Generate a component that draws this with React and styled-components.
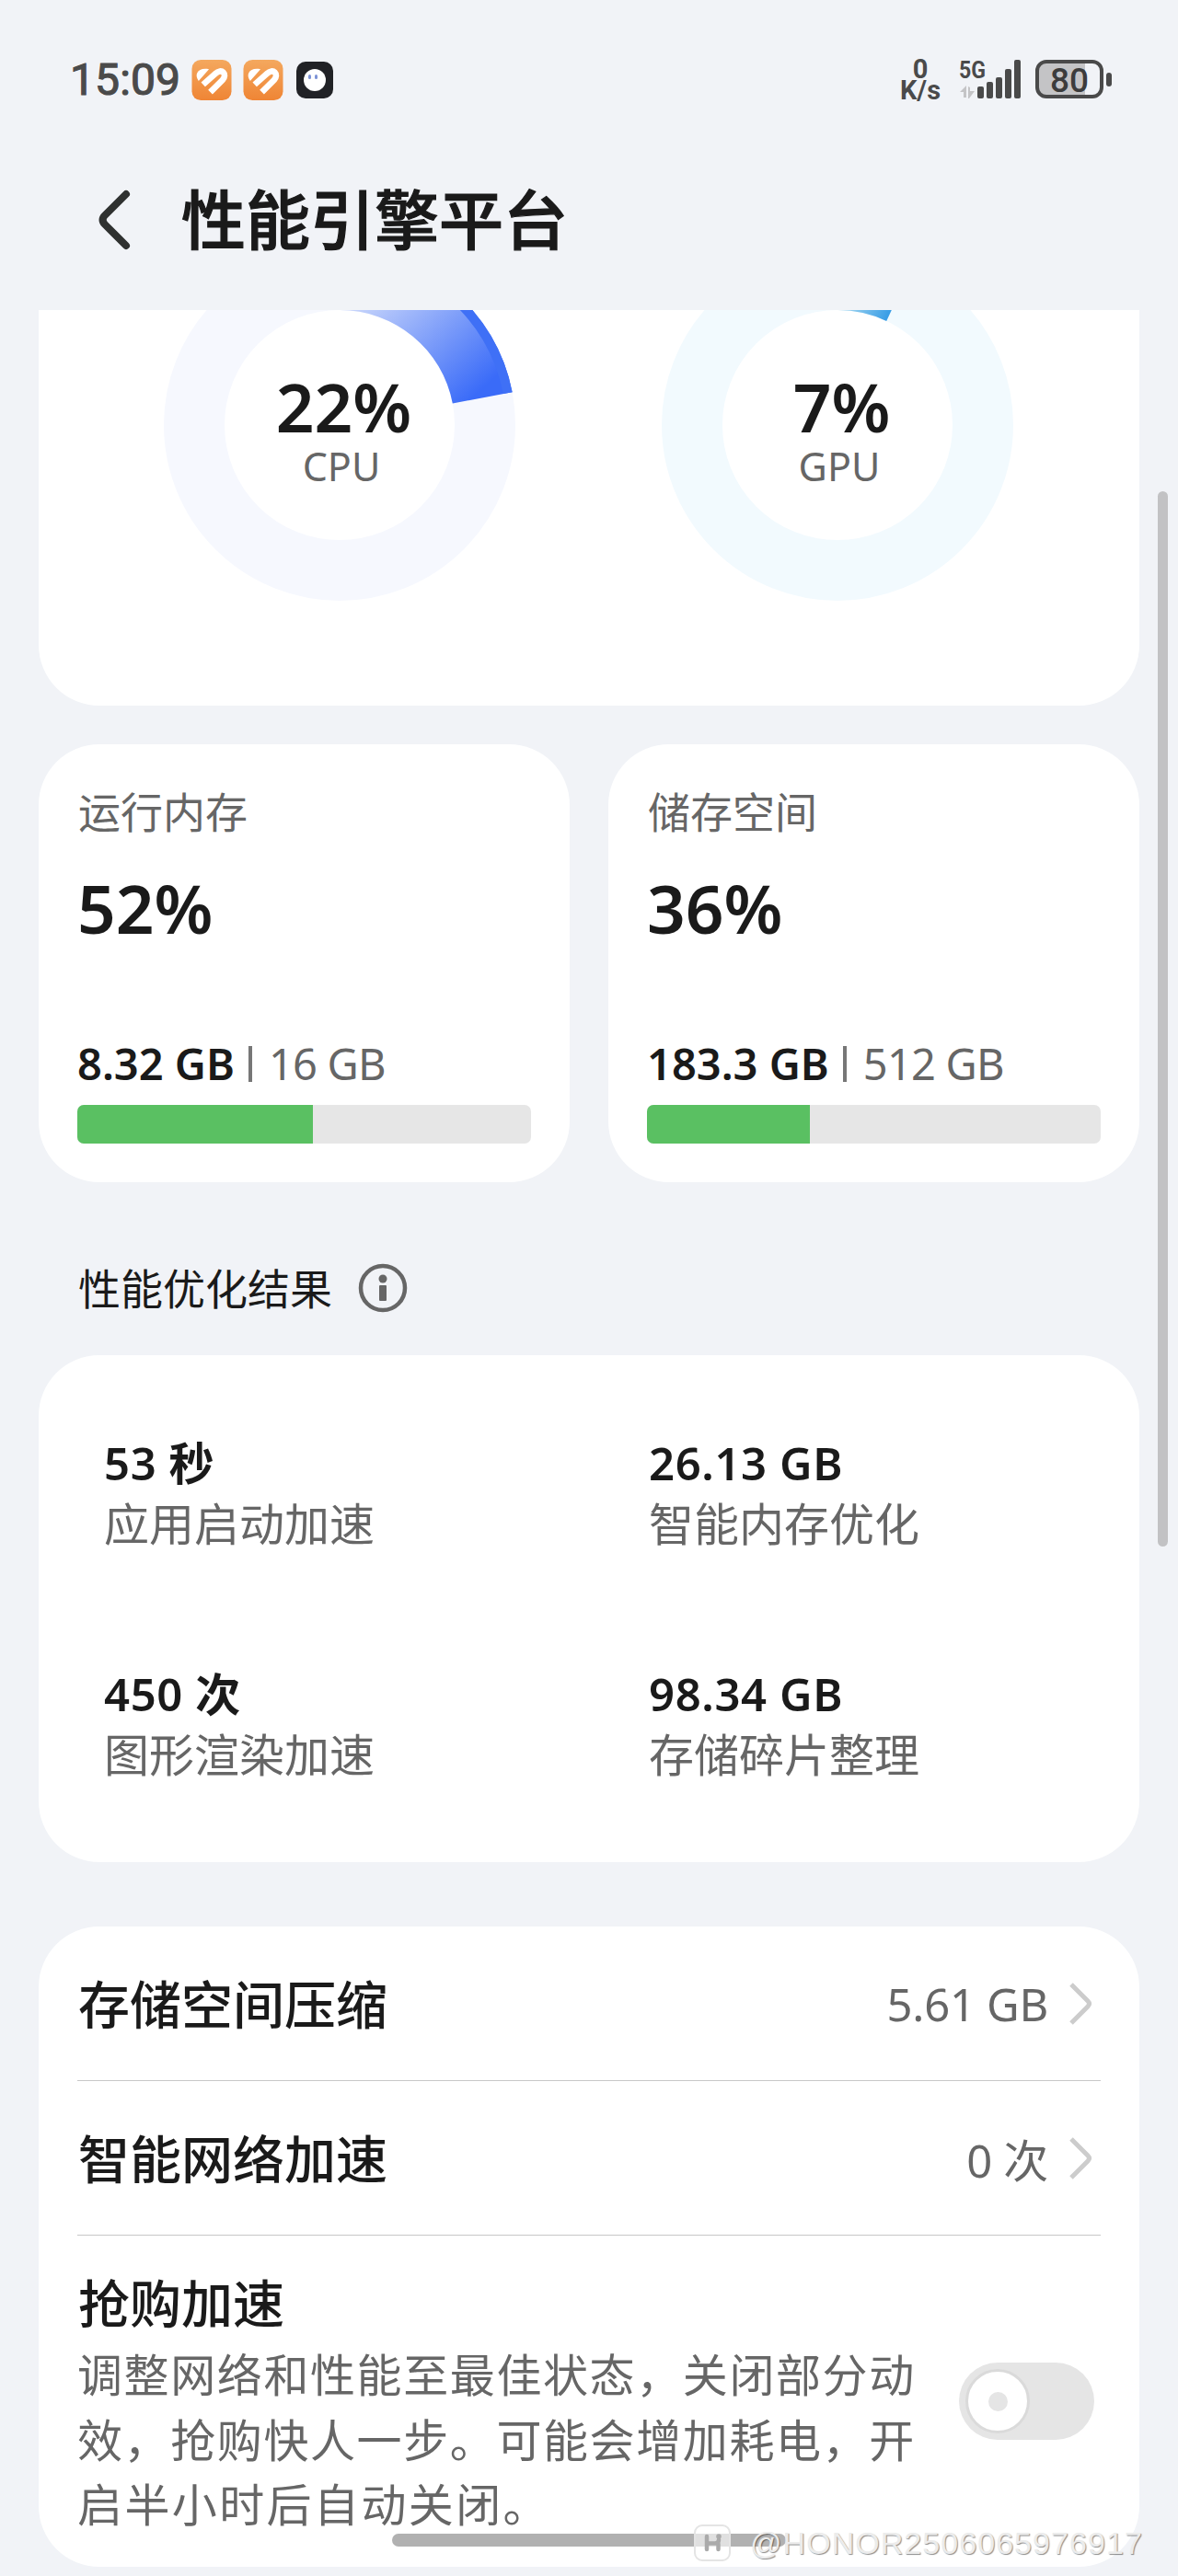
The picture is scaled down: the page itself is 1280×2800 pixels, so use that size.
import React from 'react';
import styled, { createGlobalStyle } from 'styled-components';

const GlobalStyle = createGlobalStyle`
  * {
    box-sizing: border-box;
  }

  body {
    margin: 0;
    background: #f1f3f7;
    font-family: 'Noto Sans', 'Noto Sans CJK SC', sans-serif;
    color: #1a1a1a;
  }
`;

const Screen = styled.div`
  position: relative;
  width: 1280px;
  height: 2800px;
  overflow: hidden;
  background: #f1f3f7;
`;

const StatusBar = styled.div`
  display: flex;
  justify-content: space-between;
  height: 173px;
  padding: 64px 71px 0 76px;
  color: #4a4a4a;
`;

const StatusGroup = styled.div`
  display: flex;
  height: 45px;
  align-items: center;
`;

const Clock = styled.span`
  width: 132px;
  font-family: Roboto, sans-serif;
  font-size: 48px;
  line-height: 45px;
  letter-spacing: 0.1px;
  -webkit-text-stroke: 1.2px #4a4a4a;
`;

const AppIcon = styled.svg`
  width: ${props => props.$size}px;
  height: ${props => props.$size}px;
  margin-left: ${props => props.$gap}px;
`;

const NetSpeed = styled.div`
  width: 46px;
  margin-right: 19px;
  font-family: Roboto, sans-serif;
  font-size: 29px;
  font-weight: 700;
  line-height: 23px;
  text-align: center;
`;

const Signal = styled.svg`
  width: 68px;
  height: 45px;
  margin-right: 15px;
  overflow: visible;
`;

const Battery = styled.svg`
  width: 84px;
  height: 45px;
`;

const Header = styled.header`
  display: flex;
  align-items: center;
  height: 132px;
  padding-left: 106px;
  margin-bottom: 32px;
`;

const BackIcon = styled.svg`
  width: 38px;
  height: 68px;
  margin-right: 53px;
`;

const Title = styled.h1`
  margin: 0;
  font-size: 70px;
  font-weight: 500;
  line-height: 100px;
  -webkit-text-stroke: 1.2px #1a1a1a;
`;

const Content = styled.main`
  display: flex;
  flex-direction: column;
  padding: 0 42px;
`;

const Card = styled.section`
  background: #fff;
  border-radius: 66px;
`;

const DialCard = styled(Card)`
  display: flex;
  justify-content: space-between;
  height: 430px;
  padding: 0 137px 0 136px;
  border-radius: 0 0 66px 66px;
`;

const Dial = styled.div`
  display: grid;
  width: 382px;
  height: 316px;

  > * {
    grid-area: 1 / 1;
  }
`;

const DialLabel = styled.div`
  padding: 63px 0 0 4px;
  text-align: center;
`;

const Percent = styled.div`
  font-size: 73px;
  font-weight: 600;
  line-height: 84px;
`;

const DialPercent = styled(Percent)`
  padding-left: 5px;
`;

const DialName = styled.div`
  font-size: 43px;
  line-height: 46px;
  color: #666;
`;

const UsageRow = styled.div`
  display: flex;
  gap: 42px;
  margin-top: 42px;
`;

const UsageCard = styled(Card)`
  flex: 1;
  height: 476px;
  padding: 40px 42px 0;
`;

const UsageName = styled.div`
  height: 96px;
  padding-left: 1px;
  font-size: 46px;
  line-height: 66px;
  color: #666;
`;

const UsageAmount = styled.div`
  display: flex;
  align-items: center;
  height: 56px;
  margin: 99px 0 17px;
  font-size: 47px;
  white-space: pre;
`;

const Used = styled.span`
  font-weight: 600;
`;

const Divider = styled.span`
  width: 4px;
  height: 39px;
  margin: 0 18px 0 15px;
  background: #777;
`;

const Total = styled.span`
  letter-spacing: -0.8px;
  color: #666;
`;

const Track = styled.div`
  height: 42px;
  overflow: hidden;
  border-radius: 7px;
  background: #e6e6e6;
`;

const Fill = styled.div`
  height: 100%;
  background: #5ac062;
`;

const SectionHead = styled.div`
  display: flex;
  align-items: center;
  gap: 28px;
  height: 188px;
  padding: 42px 42px 0;
`;

const SectionTitle = styled.h2`
  margin: 0;
  padding: 0 0 4px 1px;
  font-size: 46px;
  font-weight: 400;
`;

const InfoIcon = styled.svg`
  width: 54px;
  height: 54px;
`;

const ResultCard = styled(Card)`
  display: grid;
  grid-template-columns: 592px 1fr;
  grid-auto-rows: 251px;
  height: 551px;
  padding: 83px 0 0 71px;
`;

const ResultValue = styled.div`
  font-size: 49px;
  font-weight: 600;
  line-height: 68px;
  letter-spacing: 0.6px;
`;

const ResultName = styled.div`
  font-size: 49px;
  line-height: 64px;
  color: #666;
`;

const ListCard = styled(Card)`
  height: 696px;
  margin-top: 70px;
  padding: 0 42px;
`;

const ListRow = styled.div`
  display: flex;
  align-items: center;
  height: 168px;
  padding-right: 9px;
  border-bottom: 1px solid #c8c8c8;
`;

const ItemTitle = styled.div`
  flex: 1;
  padding-left: 1px;
  font-size: 56px;
  font-weight: 500;
  line-height: 80px;
`;

const ItemValue = styled.div`
  font-size: 49px;
  letter-spacing: -0.3px;
  color: #666;
`;

const ArrowIcon = styled.svg`
  width: 26px;
  height: 48px;
  margin-left: 22px;
`;

const SwitchRow = styled.div`
  display: flex;
  align-items: flex-start;
  justify-content: space-between;
  padding: 33px 7px 0 0;
`;

const Description = styled.div`
  width: 910px;
  margin-top: 3px;
  font-size: 49px;
  line-height: 70.5px;
  color: #666;
`;

const Line = styled.div`
  white-space: nowrap;
  letter-spacing: ${props => props.$spacing}px;
`;

const Toggle = styled.div`
  display: flex;
  align-items: center;
  width: 147px;
  height: 84px;
  margin-top: 105px;
  padding-left: 7px;
  border-radius: 42px;
  background: #e5e5e5;
`;

const Knob = styled.div`
  display: flex;
  align-items: center;
  justify-content: center;
  width: 70px;
  height: 70px;
  border: 3px solid #dadada;
  border-radius: 50%;
  background: #fff;

  &::after {
    content: '';
    width: 21px;
    height: 21px;
    border-radius: 50%;
    background: #e5e5e5;
  }
`;

const ScrollThumb = styled.div`
  position: absolute;
  top: 534px;
  right: 11px;
  width: 11px;
  height: 1147px;
  border-radius: 6px;
  background: #c2c2c4;
`;

const HomeBar = styled.div`
  position: absolute;
  bottom: 32px;
  left: 426px;
  width: 428px;
  height: 14px;
  border-radius: 7px;
  background: #b1b1b1;
`;

const Watermark = styled.div`
  position: absolute;
  bottom: 14px;
  left: 753px;
  display: flex;
  align-items: center;
  height: 44px;
  font-family: 'Liberation Sans', Arial, sans-serif;
  font-size: 34px;
  letter-spacing: 1.05px;
  color: #ececec;
  text-shadow: 1px 1px 1px rgba(0, 0, 0, 0.45);
  white-space: nowrap;
`;

const WatermarkIcon = styled.svg`
  width: 42px;
  height: 42px;
  margin-right: 20px;
`;

const HeartApp = ({ gap }) => (
  <AppIcon $size={44} $gap={gap} viewBox="0 0 44 45">
    <defs>
      <linearGradient id="heart-bg" x1="0" y1="0" x2="0" y2="1">
        <stop offset="0" stopColor="#f4a85e" />
        <stop offset="1" stopColor="#ef8535" />
      </linearGradient>
    </defs>
    <rect width="44" height="45" rx="10" fill="url(#heart-bg)" />
    <path d="M7.5 23.5C2 16 7 8 19 10.5Z" fill="#fff" />
    <path
      d="M12.5 27.5L26 15.5C33 8.5 40 16 34 22.5L20.5 36"
      fill="none"
      stroke="#fff"
      strokeWidth="6.8"
    />
  </AppIcon>
);

const GhostApp = () => (
  <AppIcon $size={40} $gap={14} viewBox="0 0 40 40">
    <rect width="40" height="40" rx="10" fill="#212226" />
    <circle cx="20" cy="20" r="12" fill="#fff" />
    <rect x="13" y="14" width="3" height="5" rx="1.5" fill="#7d93d6" />
    <rect x="20" y="14" width="3" height="5" rx="1.5" fill="#7d93d6" />
  </AppIcon>
);

const OUTER = 191;
const INNER = 125;

const point = (radius, percent) => {
  const angle = (percent / 100) * Math.PI * 2;
  return `${OUTER + radius * Math.sin(angle)} ${INNER - radius * Math.cos(angle)}`;
};

const slice = (outer, inner, percent) =>
  `M${point(outer, 0)}A${outer} ${outer} 0 0 1 ${point(outer, percent)}L${point(inner, percent)}A${inner} ${inner} 0 0 0 ${point(inner, 0)}Z`;

// The card is scrolled, so the view box starts at the top of the inner circle.
const UsageDial = ({ name, percent, track, from, to, edge }) => (
  <Dial>
    <svg width="382" height="316" viewBox="0 0 382 316">
      <defs>
        <linearGradient
          id={`dial-${name}`}
          gradientUnits="userSpaceOnUse"
          x1={name === 'CPU' ? 222 : 190}
          y1={name === 'CPU' ? -20 : -10}
          x2={name === 'CPU' ? 330 : 244}
          y2={name === 'CPU' ? 100 : 10}
        >
          <stop offset="0" stopColor={from} />
          <stop offset="1" stopColor={to} />
        </linearGradient>
      </defs>
      <circle cx="191" cy="125" r="158" fill="none" stroke={track} strokeWidth="66" />
      <path d={slice(OUTER, INNER, percent)} fill={`url(#dial-${name})`} />
      <path d={slice(OUTER, 181, percent)} fill={edge} />
    </svg>
    <DialLabel>
      <DialPercent>{percent}%</DialPercent>
      <DialName>{name}</DialName>
    </DialLabel>
  </Dial>
);

const Usage = ({ name, percent, used, total }) => (
  <UsageCard>
    <UsageName>{name}</UsageName>
    <Percent>{percent}%</Percent>
    <UsageAmount>
      <Used>{used}</Used>
      <Divider />
      <Total>{total}</Total>
    </UsageAmount>
    <Track>
      <Fill style={{ width: `${percent}%` }} />
    </Track>
  </UsageCard>
);

const Arrow = () => (
  <ArrowIcon viewBox="0 0 26 48">
    <path
      d="M3 3L21 21Q24 24 21 27L3 45"
      fill="none"
      stroke="#ccc"
      strokeWidth="5"
    />
  </ArrowIcon>
);

const results = [
  { value: '53 秒', name: '应用启动加速' },
  { value: '26.13 GB', name: '智能内存优化' },
  { value: '450 次', name: '图形渲染加速' },
  { value: '98.34 GB', name: '存储碎片整理' }
];

const items = [
  { title: '存储空间压缩', value: '5.61 GB' },
  { title: '智能网络加速', value: '0 次' }
];

const App = () => (
  <Screen>
    <GlobalStyle />
    <StatusBar>
      <StatusGroup>
        <Clock>15:09</Clock>
        <HeartApp gap={0} />
        <HeartApp gap={12} />
        <GhostApp />
      </StatusGroup>
      <StatusGroup>
        <NetSpeed>
          <div>0</div>
          <div>K/s</div>
        </NetSpeed>
        <Signal viewBox="0 0 68 45" fill="#4a4a4a">
          <text x="0" y="21" fontFamily="Roboto" fontSize="26" fontWeight="700" textLength="29" lengthAdjust="spacingAndGlyphs">
            5G
          </text>
          <path d="M8 29V42H5V36H1ZM10 43V30L12 31V35H17L11 43Z" fill="#c4c4c6" />
          <rect x="20" y="30" width="7" height="13" rx="2" />
          <rect x="30" y="25" width="7" height="18" rx="2" />
          <rect x="40" y="20" width="7" height="23" rx="2" />
          <rect x="50" y="11" width="7" height="32" rx="2" />
          <rect x="60" y="1" width="7" height="42" rx="2" />
        </Signal>
        <Battery viewBox="0 0 84 45">
          <path d="M12 3H54V41H12Q2 41 2 31V13Q2 3 12 3Z" fill="#c4c4c6" />
          <rect x="2" y="3" width="70" height="38" rx="10" fill="none" stroke="#4a4a4a" strokeWidth="4" />
          <rect x="77" y="15" width="6" height="15" rx="3" fill="#4a4a4a" />
          <text x="37" y="35.5" fontFamily="Roboto" fontSize="37" fontWeight="500" textAnchor="middle" fill="#3c3c3c">
            80
          </text>
        </Battery>
      </StatusGroup>
    </StatusBar>
    <Header>
      <BackIcon viewBox="0 0 38 68" fill="none" stroke="#2f3130" strokeWidth="8">
        <path d="M31 6L8 29Q3 34 8 39L31 62" strokeLinecap="round" />
      </BackIcon>
      <Title>性能引擎平台</Title>
    </Header>
    <Content>
      <DialCard>
        <UsageDial name="CPU" percent={22} track="#f6f8fe" from="#c9d6fb" to="#3a6bf8" edge="#3f70f6" />
        <UsageDial name="GPU" percent={7} track="#f2fafe" from="#b9e3f3" to="#3a9ee6" edge="#3a9ee6" />
      </DialCard>
      <UsageRow>
        <Usage name="运行内存" percent={52} used="8.32 GB" total="16 GB" />
        <Usage name="储存空间" percent={36} used="183.3 GB" total="512 GB" />
      </UsageRow>
      <SectionHead>
        <SectionTitle>性能优化结果</SectionTitle>
        <InfoIcon viewBox="0 0 54 54" fill="#666">
          <circle cx="27" cy="27" r="24" fill="none" stroke="#666" strokeWidth="4.5" />
          <circle cx="27" cy="17" r="4.5" />
          <rect x="23" y="24" width="8" height="17" rx="1" />
        </InfoIcon>
      </SectionHead>
      <ResultCard>
        {results.map(result => (
          <div key={result.name}>
            <ResultValue>{result.value}</ResultValue>
            <ResultName>{result.name}</ResultName>
          </div>
        ))}
      </ResultCard>
      <ListCard>
        {items.map(item => (
          <ListRow key={item.title}>
            <ItemTitle>{item.title}</ItemTitle>
            <ItemValue>{item.value}</ItemValue>
            <Arrow />
          </ListRow>
        ))}
        <SwitchRow>
          <div>
            <ItemTitle>抢购加速</ItemTitle>
            <Description>
              <Line $spacing={1.6}>调整网络和性能至最佳状态，关闭部分动</Line>
              <Line $spacing={1.6}>效，抢购快人一步。可能会增加耗电，开</Line>
              <Line $spacing={2.4}>启半小时后自动关闭。</Line>
            </Description>
          </div>
          <Toggle>
            <Knob />
          </Toggle>
        </SwitchRow>
      </ListCard>
    </Content>
    <ScrollThumb />
    <HomeBar />
    <Watermark>
      <WatermarkIcon viewBox="0 0 42 42">
        <rect x="2" y="2" width="38" height="38" rx="8" fill="#fff" fillOpacity="0.6" stroke="#e4e4e4" strokeWidth="2" />
        <path
          d="M15 14V28M15 21.5H24Q28 21.5 28 17.5M27.5 22V28"
          stroke="#aaa"
          strokeWidth="4.5"
          strokeLinecap="round"
          fill="none"
        />
        <circle cx="28" cy="14" r="2.8" fill="#aaa" />
      </WatermarkIcon>
      @HONOR2506065976917
    </Watermark>
  </Screen>
);

export default App;
